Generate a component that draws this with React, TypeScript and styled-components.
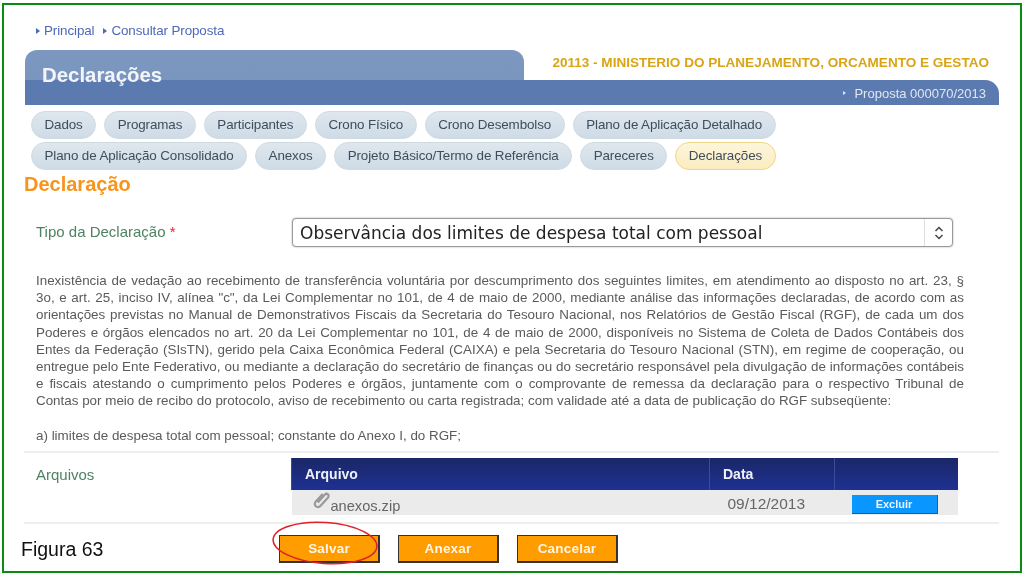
import styled, { createGlobalStyle } from "styled-components";

const GlobalStyle = createGlobalStyle`
  html, body {
    margin: 0;
    padding: 0;
    background: #fff;
  }
  body {
    font-family: "Liberation Sans", Arial, sans-serif;
    overflow: hidden;
  }
`;

const firstTabs = ["Dados", "Programas", "Participantes", "Crono Físico", "Crono Desembolso", "Plano de Aplicação Detalhado"];
const secondTabs = ["Plano de Aplicação Consolidado", "Anexos", "Projeto Básico/Termo de Referência", "Pareceres", "Declarações"];

const lines = [
  "Inexistência de vedação ao recebimento de transferência voluntária por descumprimento dos seguintes limites, em atendimento ao disposto no art. 23, §",
  "3o, e art. 25, inciso IV, alínea \"c\", da Lei Complementar no 101, de 4 de maio de 2000, mediante análise das informações declaradas, de acordo com as",
  "orientações previstas no Manual de Demonstrativos Fiscais da Secretaria do Tesouro Nacional, nos Relatórios de Gestão Fiscal (RGF), de cada um dos",
  "Poderes e órgãos elencados no art. 20 da Lei Complementar no 101, de 4 de maio de 2000, disponíveis no Sistema de Coleta de Dados Contábeis dos",
  "Entes da Federação (SIsTN), gerido pela Caixa Econômica Federal (CAIXA) e pela Secretaria do Tesouro Nacional (STN), em regime de cooperação, ou",
  "entregue pelo Ente Federativo, ou mediante a declaração do secretário de finanças ou do secretário responsável pela divulgação de informações contábeis",
  "e fiscais atestando o cumprimento pelos Poderes e órgãos, juntamente com o comprovante de remessa da declaração para o respectivo Tribunal de",
];

const App = () => {
  return (
    <>
      <GlobalStyle />
      <Frame>
        <Content>
          <Breadcrumb>
            <Crumb>Principal</Crumb>
            <Crumb>Consultar Proposta</Crumb>
          </Breadcrumb>

          <Header>
            <HeaderTab>Declarações</HeaderTab>
            <Ministry>20113 - MINISTERIO DO PLANEJAMENTO, ORCAMENTO E GESTAO</Ministry>
            <HeaderBar>
              <Proposal>Proposta 000070/2013</Proposal>
            </HeaderBar>
          </Header>

          <TabRows>
            <TabRow>
              {firstTabs.map((tab) => (
                <Tab key={tab}>{tab}</Tab>
              ))}
            </TabRow>
            <TabRow>
              {secondTabs.map((tab) => (
                <Tab key={tab} $active={tab === "Declarações"}>
                  {tab}
                </Tab>
              ))}
            </TabRow>
          </TabRows>

          <Title>Declaração</Title>

          <TypeRow>
            <FieldLabel>
              Tipo da Declaração <Required>*</Required>
            </FieldLabel>
            <SelectBox>
              <span>Observância dos limites de despesa total com pessoal</span>
              <SelectArrows>
                <svg width="10" height="16" viewBox="0 0 10 16" fill="none" stroke="#444" strokeWidth="1.5">
                  <path d="M1.5 6 L5 2.5 L8.5 6" />
                  <path d="M1.5 10 L5 13.5 L8.5 10" />
                </svg>
              </SelectArrows>
            </SelectBox>
          </TypeRow>

          <Legal>
            {lines.map((line) => (
              <LegalLine key={line} $justify>
                {line}
              </LegalLine>
            ))}
            <LegalLine>
              Contas por meio de recibo do protocolo, aviso de recebimento ou carta registrada; com validade até a data de publicação do RGF subseqüente:
            </LegalLine>
            <LegalLine>&nbsp;</LegalLine>
            <LegalLine>a) limites de despesa total com pessoal; constante do Anexo I, do RGF;</LegalLine>
          </Legal>

          <FilesRow>
            <FilesLabel>Arquivos</FilesLabel>
            <FilesTable>
              <thead>
                <tr>
                  <HeadCell $width={418}>Arquivo</HeadCell>
                  <HeadCell $width={125}>Data</HeadCell>
                  <HeadCell $width={123} />
                </tr>
              </thead>
              <tbody>
                <tr>
                  <FileCell>
                    <FileName>
                      <svg width="19" height="20" viewBox="0 0 18 18" fill="none" stroke="#9a9a9a" strokeWidth="2.1">
                        <g transform="rotate(42 9 9)">
                          <path d="M6 4 V14 A3 3 0 0 0 12 14 V3 A2 2 0 0 0 8 3 V13" />
                        </g>
                      </svg>
                      anexos.zip
                    </FileName>
                  </FileCell>
                  <DateCell>09/12/2013</DateCell>
                  <ActionCell>
                    <DeleteButton>Excluir</DeleteButton>
                  </ActionCell>
                </tr>
              </tbody>
            </FilesTable>
          </FilesRow>

          <Footer>
            <Figure>Figura 63</Figure>
            <SaveWrap>
              <ActionButton>Salvar</ActionButton>
              <Circle viewBox="0 0 108 46" fill="none" stroke="#e0202a" strokeWidth="1.5">
                <ellipse cx="53" cy="22" rx="52" ry="20.5" transform="rotate(4 53 22)" />
              </Circle>
            </SaveWrap>
            <ActionButton>Anexar</ActionButton>
            <ActionButton>Cancelar</ActionButton>
          </Footer>
        </Content>
      </Frame>
    </>
  );
};

export default App;

const Frame = styled.div`
  box-sizing: border-box;
  width: 1020px;
  height: 570px;
  margin: 3px 0 0 2px;
  border: 2px solid #0b8a12;
  overflow: hidden;
`;

const Content = styled.div`
  padding: 17px 21px 0;
  filter: blur(0.45px);
`;

const Breadcrumb = styled.div`
  display: flex;
  gap: 9px;
  padding-left: 11px;
  font-size: 13.4px;
  line-height: 18px;
  letter-spacing: -0.1px;
  color: #4c68b8;
`;

const Crumb = styled.span`
  display: flex;
  align-items: center;
  gap: 4px;

  &::before {
    content: "";
    border-left: 4px solid #4c68b8;
    border-top: 3px solid transparent;
    border-bottom: 3px solid transparent;
  }
`;

const Header = styled.div`
  display: grid;
  grid-template-columns: 499px 1fr;
  grid-template-rows: 30px 25px;
  margin-top: 10px;
`;

const HeaderTab = styled.div`
  grid-row: 1 / 3;
  padding: 14px 0 0 17px;
  border-radius: 12px 12px 0 0;
  background: linear-gradient(#7d98c0 0, #7b96be 30px, #5b7bb0 30px);
  color: #f2f5fa;
  font-size: 20.4px;
  line-height: 22px;
  font-weight: bold;
`;

const Ministry = styled.div`
  padding: 5px 10px 0 0;
  text-align: right;
  color: #d9a514;
  font-size: 13.55px;
  line-height: 16px;
  font-weight: bold;
  white-space: nowrap;
`;

const HeaderBar = styled.div`
  display: flex;
  align-items: center;
  justify-content: flex-end;
  padding: 1px 13px 0 0;
  border-radius: 0 14px 0 0;
  background: #5b7bb0;
`;

const Proposal = styled.span`
  display: flex;
  align-items: center;
  gap: 8px;
  color: #dfe6f1;
  font-size: 13px;

  &::before {
    content: "";
    border-left: 3px solid #dfe6f1;
    border-top: 2px solid transparent;
    border-bottom: 2px solid transparent;
  }
`;

const TabRows = styled.div`
  display: flex;
  flex-direction: column;
  gap: 3px;
  margin-top: 6px;
  padding-left: 6px;
`;

const TabRow = styled.div`
  display: flex;
  gap: 8px;
`;

const Tab = styled.div<{ $active?: boolean }>`
  box-sizing: border-box;
  height: 28px;
  padding: 0 12.5px;
  border-radius: 14px;
  border: 1px solid ${(p) => (p.$active ? "#f2d488" : "#cfdae3")};
  background: ${(p) =>
    p.$active ? "linear-gradient(#fdf6dc, #fbecc0)" : "linear-gradient(#dfe7ee, #cedbe6)"};
  color: #3f4d5c;
  font-size: 13.4px;
  line-height: 25px;
  letter-spacing: -0.1px;
  white-space: nowrap;
`;

const Title = styled.h2`
  margin: 3px 0 0 -1px;
  color: #f7941d;
  font-size: 20px;
  line-height: 22px;
  font-weight: bold;
`;

const TypeRow = styled.div`
  display: grid;
  grid-template-columns: 256px 661px;
  align-items: center;
  margin-top: 23px;
  padding-left: 11px;
`;

const FieldLabel = styled.div`
  color: #4f8263;
  font-size: 15px;
  line-height: 18px;
  margin-top: -1px;
`;

const Required = styled.span`
  color: #e8202e;
`;

const SelectBox = styled.div`
  box-sizing: border-box;
  display: flex;
  align-items: center;
  justify-content: space-between;
  height: 29px;
  padding-left: 7px;
  border: 1px solid #999;
  border-radius: 4px;
  box-shadow: 0 0 2px rgba(0, 0, 0, 0.35);
  background: #fff;
  color: #222;
  font-family: "DejaVu Sans", Verdana, sans-serif;
  font-size: 17px;
  white-space: nowrap;
`;

const SelectArrows = styled.span`
  display: flex;
  align-items: center;
  justify-content: center;
  width: 27px;
  height: 100%;
  border-left: 1px solid #ddd;
`;

const Legal = styled.div`
  width: 928px;
  margin: 25px 0 0 11px;
  color: #5a5a5a;
  font-size: 13.4px;
  line-height: 17.2px;
`;

const LegalLine = styled.div<{ $justify?: boolean }>`
  white-space: nowrap;
  text-align: justify;
  text-align-last: ${(p) => (p.$justify ? "justify" : "left")};
`;

const FilesRow = styled.div`
  display: grid;
  grid-template-columns: 255px 666px;
  margin: 7px 0 0 -1px;
  padding: 5px 0 7px 12px;
  border-top: 2px solid #eee;
  border-bottom: 2px solid #eee;
`;

const FilesLabel = styled.div`
  padding-top: 8px;
  color: #4f8263;
  font-size: 15px;
  line-height: 18px;
`;

const FilesTable = styled.table`
  width: 666px;
  border-collapse: collapse;
  table-layout: fixed;
`;

const HeadCell = styled.th<{ $width: number }>`
  box-sizing: border-box;
  width: ${(p) => p.$width}px;
  height: 32px;
  padding: 0 0 0 13px;
  border-left: 1px solid #3a4c9c;
  background: linear-gradient(#1a2768, #1e3192);
  color: #eef1f8;
  font-size: 14px;
  text-align: left;
`;

const FileCell = styled.td`
  height: 25px;
  padding: 0 0 0 20px;
  background: #ebebeb;
`;

const FileName = styled.span`
  display: flex;
  align-items: flex-end;
  height: 23px;
  color: #666;
  font-size: 14.6px;
  line-height: 16px;

  svg {
    margin-bottom: 4px;
  }
`;

const DateCell = styled.td`
  padding: 3px 0 0 18px;
  background: #ebebeb;
  color: #666;
  font-size: 15.5px;
`;

const ActionCell = styled.td`
  padding: 4px 0 0 17px;
  background: #ebebeb;
`;

const DeleteButton = styled.button`
  display: block;
  box-sizing: border-box;
  width: 86px;
  height: 19px;
  padding: 0;
  border: none;
  border-right: 1px solid #1060b0;
  border-bottom: 1px solid #1060b0;
  background: #0a96ff;
  color: #e8f4ff;
  font-family: inherit;
  font-size: 11px;
  font-weight: bold;
`;

const Footer = styled.div`
  display: flex;
  align-items: center;
  gap: 18px;
  margin: 11px 0 0 -4px;
`;

const Figure = styled.div`
  width: 240px;
  color: #111;
  font-size: 19.5px;
  line-height: 22px;
`;

const SaveWrap = styled.div`
  position: relative;
`;

const ActionButton = styled.button`
  display: block;
  box-sizing: border-box;
  width: 101px;
  height: 28px;
  padding: 0;
  border: 1px solid #333;
  border-right-width: 2px;
  border-bottom-width: 2px;
  background: #ff9c00;
  color: #fff5e6;
  font-family: inherit;
  font-size: 13.5px;
  letter-spacing: 0.2px;
  font-weight: bold;
`;

const Circle = styled.svg`
  position: absolute;
  left: -7px;
  top: -14px;
  width: 108px;
  height: 46px;
  overflow: visible;
  pointer-events: none;
`;
